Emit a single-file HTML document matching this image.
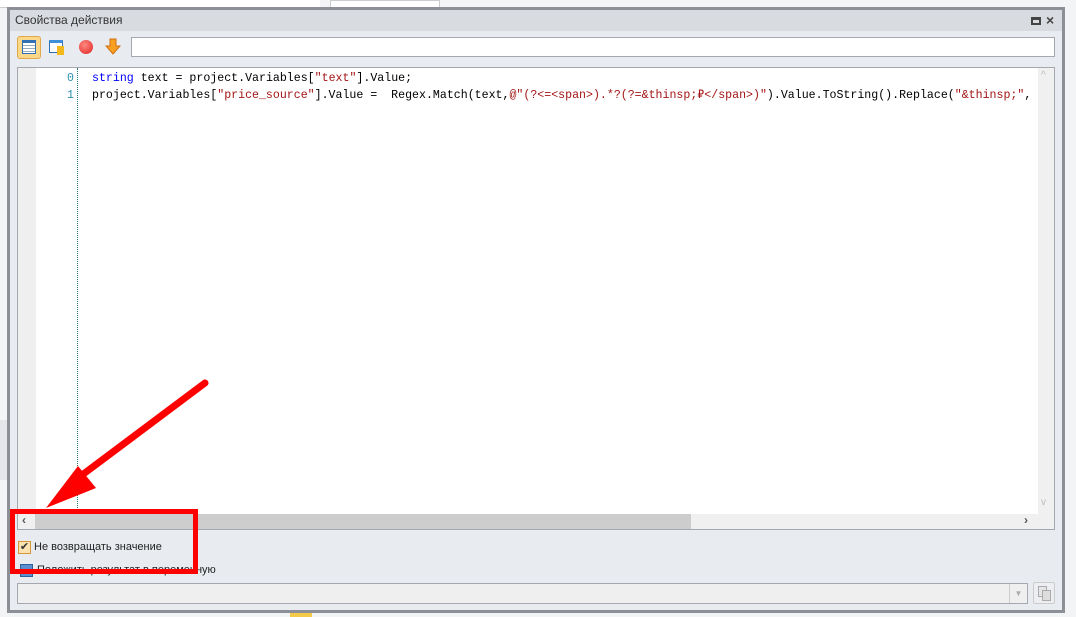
<!DOCTYPE html>
<html><head><meta charset="utf-8"><style>
*{margin:0;padding:0;box-sizing:border-box}
body{width:1076px;height:617px;overflow:hidden;background:#f3f4f6;position:relative;font-family:"Liberation Sans",sans-serif}
.a{position:absolute}
.code{font-family:"Liberation Mono",monospace;font-size:11.6px;white-space:pre;color:#000}
.kw{color:#0000ff}.st{color:#a31515}
</style></head><body>
<div class="a" style="left:0;top:0;width:320px;height:8px;background:#fff;border-bottom:1px solid #ccc"></div>
<div class="a" style="left:330px;top:0;width:110px;height:8px;background:#fff;border:1px solid #ccc"></div>
<div class="a" style="left:0;top:420px;width:8px;height:60px;background:#e4e6ea"></div>
<div class="a" style="left:7px;top:7px;width:1058px;height:606px;background:#8c8f95"></div>
<div class="a" style="left:10px;top:10px;width:1052px;height:600px;background:#e8ebf0"></div>
<div class="a" style="left:10px;top:10px;width:1052px;height:21px;background:#d8dbe0;font-size:12px;color:#333;padding:3px 0 0 5px">Свойства действия</div>
<div class="a" style="left:1031px;top:17px;width:10px;height:8px;border:2px solid #444;border-top-width:3px"></div>
<div class="a" style="left:1046px;top:12px;font-size:14px;font-weight:bold;color:#444">×</div>
<!-- toolbar -->
<div class="a" style="left:17px;top:36px;width:24px;height:23px;background:#fbd78a;border:1px solid #e0a84a;border-radius:3px"></div>
<div class="a" style="left:22px;top:40px;width:14px;height:14px;background:repeating-linear-gradient(#fff 0 2px,#9ab 2px 3px);border:1px solid #2f6fb5;border-top:3px solid #2f6fb5"></div>
<div class="a" style="left:49px;top:40px;width:14px;height:13px;background:#fff;border:1px solid #2f6fb5;border-top:3px solid #3f8fd8"></div>
<div class="a" style="left:57px;top:46px;width:7px;height:9px;background:#f2b81c"></div>
<div class="a" style="left:79px;top:40px;width:14px;height:14px;border-radius:50%;background:radial-gradient(circle at 40% 35%,#ff8a80,#e02020)"></div>
<svg class="a" style="left:105px;top:38px" width="16" height="18"><path d="M5 1h6v7h4l-7 8-7-8h4z" fill="#f9a020" stroke="#d07010"/></svg>
<div class="a" style="left:131px;top:37px;width:924px;height:20px;background:#fff;border:1px solid #a5a8ae"></div>
<!-- editor -->
<div class="a" style="left:17px;top:67px;width:1038px;height:463px;background:#fff;border:1px solid #a5a8ae"></div>
<div class="a" style="left:18px;top:68px;width:18px;height:446px;background:#efefef"></div>
<div class="a" style="left:77px;top:68px;height:446px;border-left:1px dotted #2a7a7a"></div>
<div class="a code" style="left:60px;top:70px;color:#2b91af;line-height:17px;text-align:right;width:14px">0
1</div>
<div class="a code" style="left:92px;top:70px;line-height:17px"><span class="kw">string</span> text = project.Variables[<span class="st">"text"</span>].Value;
project.Variables[<span class="st">"price_source"</span>].Value =  Regex.Match(text,<span class="st">@"(?&lt;=&lt;span&gt;).*?(?=&amp;thinsp;₽&lt;/span&gt;)"</span>).Value.ToString().Replace(<span class="st">"&amp;thinsp;"</span>,</div>
<div class="a" style="left:1038px;top:68px;width:16px;height:446px;background:#f0f0f0"></div>
<div class="a" style="left:1041px;top:70px;font-size:10px;color:#bbb">^</div>
<div class="a" style="left:1041px;top:497px;font-size:10px;color:#bbb">v</div>
<div class="a" style="left:18px;top:514px;width:1036px;height:15px;background:#f0f0f0"></div>
<div class="a" style="left:35px;top:514px;width:656px;height:15px;background:#cdcdcd"></div>
<div class="a" style="left:22px;top:513px;font-size:12px;font-weight:bold;color:#555">‹</div>
<div class="a" style="left:1024px;top:513px;font-size:12px;font-weight:bold;color:#555">›</div>
<!-- options -->
<div class="a" style="left:18px;top:541px;width:13px;height:13px;background:#fbe3b0;border:1px solid #d8963a;font-size:11px;line-height:11px;text-align:center;color:#333">✔</div>
<div class="a" style="left:34px;top:541px;font-size:11px;color:#222">Не возвращать значение</div>
<div class="a" style="left:20px;top:564px;width:13px;height:13px;background:#5a8fd0;border:1px solid #2f5f9a"></div>
<div class="a" style="left:37px;top:564px;font-size:11px;color:#222">Положить результат в переменную</div>
<div class="a" style="left:17px;top:583px;width:1011px;height:21px;background:#efefef;border:1px solid #a5a8ae"></div>
<div class="a" style="left:1009px;top:584px;width:18px;height:19px;border-left:1px solid #ccc;font-size:8px;color:#aaa;text-align:center;line-height:19px">▼</div>
<div class="a" style="left:1033px;top:582px;width:22px;height:22px;border:1px solid #ccc;border-radius:2px;background:#eceef1"></div>
<div class="a" style="left:1038px;top:586px;width:9px;height:11px;border:1px solid #aaa;background:#e5e5e5"></div>
<div class="a" style="left:1042px;top:590px;width:9px;height:11px;border:1px solid #aaa;background:#ddd"></div>
<div class="a" style="left:290px;top:613px;width:22px;height:4px;background:#f5c94a"></div>
<!-- annotation -->
<div class="a" style="left:10px;top:509px;width:188px;height:65px;border:5px solid #ff0000"></div>
<svg class="a" style="left:0;top:0" width="1076" height="617">
<line x1="205" y1="383" x2="70" y2="484" stroke="#ff0000" stroke-width="7" stroke-linecap="round"/>
<polygon points="46,508 78,466 96,488" fill="#ff0000"/>
</svg>
</body></html>
